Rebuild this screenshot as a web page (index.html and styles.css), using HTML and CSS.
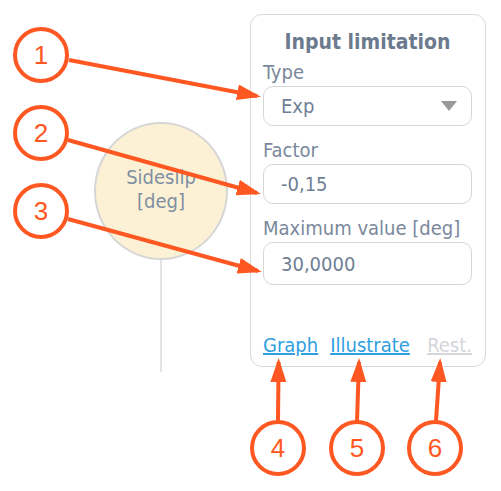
FILE: index.html
```html
<!DOCTYPE html>
<html lang="en">
<head>
  <meta charset="UTF-8" />
  <title>Input limitation</title>
  <link rel="stylesheet" href="styles.css">
</head>
<body>
  <div class="stage">
    <div class="node-col">
      <div class="node">Sideslip<br>[deg]</div>
      <div class="node-link"></div>
    </div>

    <div class="panel">
      <div class="panel-title">Input limitation</div>

      <label class="field-label">Type</label>
      <div class="field select">
        <span>Exp</span>
        <span class="caret"></span>
      </div>

      <label class="field-label">Factor</label>
      <div class="field">-0,15</div>

      <label class="field-label">Maximum value [deg]</label>
      <div class="field tall">30,0000</div>

      <div class="links">
        <a href="#" class="link">Graph</a>
        <a href="#" class="link">Illustrate</a>
        <a href="#" class="link off">Rest.</a>
      </div>
    </div>

    <!-- numbered callouts drawn over the panel -->
    <svg class="callouts" width="501" height="491" viewBox="0 0 501 491">
      <defs>
        <marker id="tip" markerWidth="6" markerHeight="4" refX="5" refY="2" orient="auto" markerUnits="strokeWidth">
          <path d="M0,0 L6,2 L0,4 z" fill="#ff5722"/>
        </marker>
      </defs>
      <g fill="none" stroke="#ff5722" stroke-width="4">
        <circle cx="41" cy="55" r="26"/>
        <circle cx="41" cy="133" r="26"/>
        <circle cx="41" cy="211" r="26"/>
        <circle cx="278" cy="448" r="26"/>
        <circle cx="357" cy="448" r="26"/>
        <circle cx="435" cy="448" r="26"/>
        <line x1="69" y1="60" x2="257" y2="96" marker-end="url(#tip)"/>
        <line x1="68" y1="140" x2="257" y2="193" marker-end="url(#tip)"/>
        <line x1="68" y1="219" x2="258" y2="271" marker-end="url(#tip)"/>
        <line x1="278" y1="421" x2="278.6" y2="362" marker-end="url(#tip)"/>
        <line x1="357" y1="421" x2="359" y2="362" marker-end="url(#tip)"/>
        <line x1="436" y1="421" x2="440" y2="362" marker-end="url(#tip)"/>
      </g>
      <g class="callout-num" fill="#ff5722" text-anchor="middle">
        <text x="41" y="64">1</text>
        <text x="41" y="142">2</text>
        <text x="41" y="220">3</text>
        <text x="278" y="457">4</text>
        <text x="357" y="457">5</text>
        <text x="435" y="457">6</text>
      </g>
    </svg>
  </div>
</body>
</html>
```
FILE: styles.css
```css
body {
  margin: 0;
  background: #fff;
  font-family: 'DejaVu Sans Condensed', 'DejaVu Sans', sans-serif;
}

.stage {
  position: relative;
  width: 501px;
  height: 491px;
  display: flex;
  align-items: flex-start;
  overflow: hidden;
}

/* diagram node */
.node-col {
  display: flex;
  flex-direction: column;
  align-items: center;
  margin: 122px 0 0 94px;
}

.node {
  width: 130px;
  height: 130px;
  border: 2px solid #d6d6d6;
  border-radius: 50%;
  background: #fdf1d5;
  color: #7f8fa3;
  font-size: 20px;
  line-height: 24px;
  text-align: center;
  display: flex;
  align-items: center;
  justify-content: center;
  padding-bottom: 4px;
  box-sizing: content-box;
}

.node-link {
  width: 2px;
  height: 112px;
  background: #e4e4e4;
}

/* settings panel */
.panel {
  margin: 14px 0 0 22px;
  width: 236px;
  height: 353px;
  box-sizing: border-box;
  border: 1px solid #d9d9d9;
  border-radius: 12px;
  padding: 15px 13px 9px 12px;
  display: flex;
  flex-direction: column;
}

.panel-title {
  text-align: center;
  font-weight: bold;
  font-size: 21px;
  line-height: 24px;
  color: #6c7a8e;
  margin-bottom: 6px;
}

.field-label {
  font-size: 20px;
  line-height: 24px;
  color: #7a889c;
}

.field {
  margin: 2px 0 12px;
  height: 40px;
  box-sizing: border-box;
  border: 1px solid #d6d6d6;
  border-radius: 10px;
  padding: 0 17px;
  display: flex;
  align-items: center;
  justify-content: space-between;
  font-size: 20px;
  color: #6f8096;
}

.field.tall {
  height: 43px;
  margin-top: 2px;
}

.caret {
  width: 0;
  height: 0;
  border-left: 8px solid transparent;
  border-right: 8px solid transparent;
  border-top: 10px solid #999;
  margin-right: -3px;
}

.links {
  margin-top: auto;
  display: flex;
  gap: 12px;
  font-size: 20px;
  line-height: 24px;
}

.link {
  color: #2f9fe0;
  text-decoration: underline;
}

.link.off {
  margin-left: auto;
  color: #d3d6da;
}

.callouts {
  position: absolute;
  left: 0;
  top: 0;
  pointer-events: none;
}

.callout-num {
  font-family: 'Liberation Sans', sans-serif;
  font-size: 26px;
}
```
